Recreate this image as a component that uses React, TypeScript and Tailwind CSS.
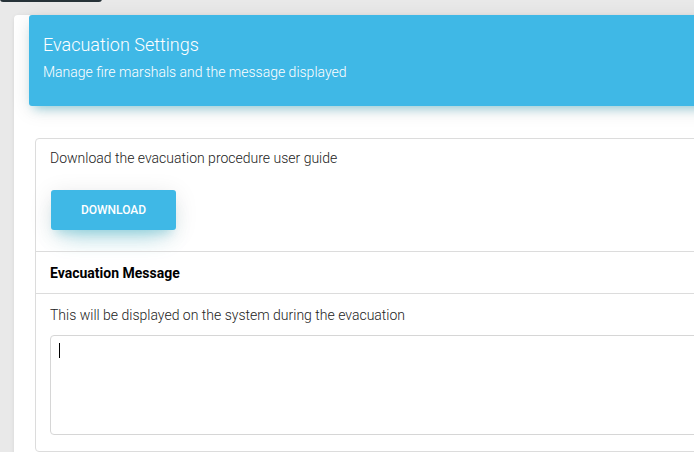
export default function App() {
  return (
    <div
      className="relative h-[452px] w-[694px] overflow-hidden bg-[#e9e9e9]"
      style={{ fontFamily: "Roboto, 'Noto Sans', sans-serif" }}
    >
      {/* piece of the toolbar button above */}
      <div className="absolute left-0 top-[-6px] h-[8px] w-[102px] rounded-b-[3px] bg-[#263238]" />

      <div className="ml-[14px] mt-[35px] w-[740px] rounded-tl-[4px] bg-white shadow-[0_1px_4px_rgba(0,0,0,0.08)] pb-[40px]">
        <div className="mx-[15px] mt-[-20px] rounded-l-[3px] bg-[#3fb8e6] px-[14px] pb-[24px] pt-[17px] text-white shadow-[0_4px_20px_0_rgba(0,0,0,0.10),0_7px_10px_-5px_rgba(0,160,190,0.4)]">
          <h1 className="text-[18px] font-light leading-[26px]">Evacuation Settings</h1>
          <p className="mt-[4px] text-[14px] font-light leading-[20px]">
            Manage fire marshals and the message displayed
          </p>
        </div>

        <div className="ml-[21px] mt-[32px] rounded-l-[4px] border border-[#dcdcdc]">
          <div className="px-[14px] pb-[21px] pt-[9px]">
            <p className="text-[14px] font-light leading-[20px] text-[#222]">
              Download the evacuation procedure user guide
            </p>
            <button className="ml-px mt-[22px] flex h-[40px] w-[125px] items-center justify-center rounded-[3px] bg-[#3fb8e6] text-[12px] font-medium uppercase text-white shadow-[0_14px_26px_-12px_rgba(0,170,200,0.45),0_4px_23px_0_rgba(0,0,0,0.10),0_8px_10px_-5px_rgba(0,170,200,0.2)]">
              Download
            </button>
          </div>
          <div className="border-t border-[#dcdcdc] px-[14px] pb-[10px] pt-[11px]">
            <h2 className="text-[14px] font-bold leading-[20px] text-black">Evacuation Message</h2>
          </div>
          <div className="border-t border-[#dcdcdc] px-[14px] pb-[16px] pt-[11px]">
            <p className="text-[14px] font-light leading-[20px] text-[#222]">
              This will be displayed on the system during the evacuation
            </p>
            <div className="mt-[10px] h-[100px] rounded-l-[4px] border border-[#d6d6d6] px-[8px] pt-[7px]">
              <div className="h-[15px] w-px bg-black" />
            </div>
          </div>
        </div>
      </div>
    </div>
  );
}
